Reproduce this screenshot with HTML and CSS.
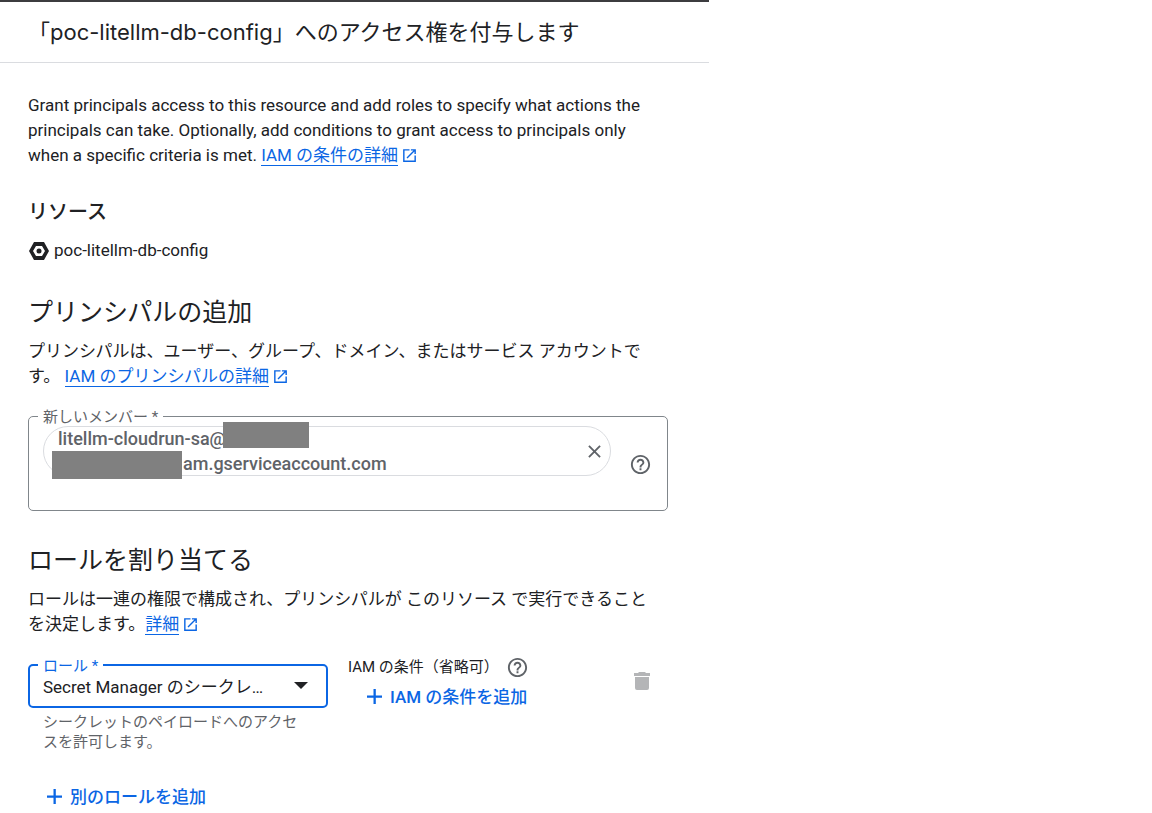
FILE: index.html
```html
<!DOCTYPE html>
<html lang="ja">
<head>
  <meta charset="UTF-8" />
  <meta name="viewport" content="width=device-width, initial-scale=1.0" />
  <title>アクセス権を付与</title>
  <link rel="stylesheet" href="styles.css">
</head>

<body>
  <svg class="sprite" aria-hidden="true">
    <symbol id="icon-launch" viewBox="0 0 24 24">
      <path d="M19 19H5V5h7V3H3v18h18v-9h-2v7zM14 3v2h3.6l-9.8 9.8 1.4 1.4L19 6.4V10h2V3h-7z" />
    </symbol>
    <symbol id="icon-help" viewBox="0 0 24 24">
      <path d="M11 18h2v-2h-2v2zm1-16C6.480 2 2 6.480 2 12s4.480 10 10 10 10-4.480 10-10S17.520 2 12 2zm0 18c-4.410 0-8-3.590-8-8s3.590-8 8-8 8 3.590 8 8-3.590 8-8 8zm0-14c-2.210 0-4 1.790-4 4h2c0-1.100.9-2 2-2s2 .9 2 2c0 2-3 1.750-3 5h2c0-2.250 3-2.500 3-5 0-2.210-1.790-4-4-4z" />
    </symbol>
    <symbol id="icon-plus" viewBox="0 0 16 16">
      <path d="M6.500 0h2.300v6.500H15v2.300H8.800V15H6.500V8.800H0V6.500h6.500z" />
    </symbol>
  </svg>

  <main class="panel">
    <header class="panel-header">
      <h1>「poc-litellm-db-config」へのアクセス権を付与します</h1>
    </header>

    <div class="panel-body">
      <p>Grant principals access to this resource and add roles to specify what actions the principals can take. Optionally, add conditions to grant access to principals only when a specific criteria is met. <a href="#">IAM の条件の詳細</a><svg class="launch"><use href="#icon-launch" /></svg></p>

      <h3>リソース</h3>
      <div class="resource">
        <svg class="resource-icon" viewBox="0 0 20 18">
          <path fill-rule="evenodd" d="M5 0h10l5 9-5 9H5L0 9zM7 4L4 9l3 5h6l3-5-3-5z" />
          <circle cx="10" cy="9" r="2.500" />
        </svg>
        <span>poc-litellm-db-config</span>
      </div>

      <h2>プリンシパルの追加</h2>
      <p>プリンシパルは、ユーザー、グループ、ドメイン、またはサービス アカウントです。 <a href="#">IAM のプリンシパルの詳細</a><svg class="launch"><use href="#icon-launch" /></svg></p>

      <fieldset class="field members">
        <legend><label for="members">新しいメンバー *</label></legend>
        <div class="members-row">
          <div class="members-main">
            <div class="chip">
              <div class="chip-text">
                <span>litellm-cloudrun-sa@</span>
                <span class="chip-domain">am.gserviceaccount.com</span>
              </div>
              <button class="chip-remove" aria-label="削除">
                <svg viewBox="0 0 14 14"><path d="M1 1l12 12M13 1L1 13" /></svg>
              </button>
              <span class="mask mask-top"></span>
              <span class="mask mask-bottom"></span>
            </div>
            <input type="text" id="members" />
          </div>
          <button class="help" aria-label="ヘルプ"><svg><use href="#icon-help" /></svg></button>
        </div>
      </fieldset>

      <h2>ロールを割り当てる</h2>
      <p>ロールは一連の権限で構成され、プリンシパルが このリソース で実行できることを決定します。<a href="#">詳細</a><svg class="launch"><use href="#icon-launch" /></svg></p>

      <div class="role-row">
        <div class="role">
          <fieldset class="field role-field">
            <legend><label for="role">ロール *</label></legend>
            <div class="select-row">
              <select id="role">
                <option>Secret Manager のシークレット アクセサー</option>
              </select>
              <svg class="arrow" viewBox="0 0 14 7"><path d="M0 0h14L7 7z" /></svg>
            </div>
          </fieldset>
          <div class="hint">シークレットのペイロードへのアクセスを許可します。</div>
        </div>

        <div class="condition">
          <div class="condition-label">
            <span>IAM の条件（省略可）</span>
            <button class="help" aria-label="ヘルプ"><svg><use href="#icon-help" /></svg></button>
          </div>
          <button class="add-btn"><svg><use href="#icon-plus" /></svg>IAM の条件を追加</button>
        </div>

        <button class="delete" aria-label="ロールを削除" disabled>
          <svg viewBox="0 0 16 18"><path d="M5 0h6l1 1h4v3H0V1h4zM1 5h14v11a2 2 0 0 1-2 2H3a2 2 0 0 1-2-2z" /></svg>
        </button>
      </div>

      <button class="add-btn add-role"><svg><use href="#icon-plus" /></svg>別のロールを追加</button>
    </div>
  </main>
</body>
</html>
```

FILE: styles.css
```css
* {
  box-sizing: border-box;
}

body {
  margin: 0;
  background-color: #fff;
  color: #202124;
  font-family: Roboto, "Noto Sans CJK JP", sans-serif;
  font-size: 17px;
  line-height: 25px;
}

.sprite {
  display: none;
}

svg {
  fill: currentColor;
  flex-shrink: 0;
}

button {
  display: flex;
  align-items: center;
  padding: 0;
  border: none;
  background: none;
  color: inherit;
  font: inherit;
  cursor: pointer;
}

.panel {
  max-width: 709px;
}

.panel-header {
  padding: 14px 28px;
  border-top: 2px solid #3c3c3f;
  border-bottom: 1px solid #dadce0;
}

h1, h2, h3, p {
  margin: 0;
}

h1 {
  font-family: Inter, "Noto Sans CJK JP", sans-serif;
  font-size: 22px;
  font-weight: 400;
  line-height: 32px;
}

.panel-body {
  padding: 30px 41px 0 28px;
}

h2 {
  margin: 34px 0 10px;
  font-size: 25px;
  font-weight: 400;
  line-height: 32px;
}

h3 {
  margin: 30px 0 12px;
  font-size: 20px;
  font-weight: 500;
  line-height: 28px;
}

p {
  padding-right: 10px;
}

a {
  color: #0b66e4;
  text-decoration: none;
  border-bottom: 1px solid;
}

.launch {
  width: 17px;
  height: 17px;
  margin-left: 3px;
  vertical-align: -3px;
  color: #0b66e4;
}

.resource {
  display: flex;
  align-items: center;
  gap: 5px;
}

.resource-icon {
  width: 20px;
  height: 18px;
  margin-left: 1px;
}

.field {
  min-width: 0;
  margin: 0;
  padding: 0 14px;
  border: 1px solid #80868b;
  border-radius: 5px;
}

.field legend {
  margin-left: -5px;
  padding: 2px 5px 0;
  font-size: 15px;
  line-height: 18px;
  color: #5f6368;
}

.members {
  margin-top: 17px;
}

.members-row {
  display: flex;
  align-items: center;
  gap: 18px;
  padding-bottom: 8px;
}

.members-main {
  flex: 1;
}

.members input {
  display: block;
  width: 100%;
  height: 26px;
  padding: 0 14px;
  border: none;
  outline: none;
  background: none;
  font: inherit;
}

.chip {
  position: relative;
  display: flex;
  align-items: center;
  justify-content: space-between;
  height: 50px;
  padding: 0 9px 0 14px;
  border: 1px solid #dadce0;
  border-radius: 25px;
  color: #5f6368;
  font-size: 18px;
  font-weight: 500;
}

.chip-text {
  display: flex;
  flex-direction: column;
}

.chip-domain {
  padding-left: 125px;
}

.chip-remove svg {
  width: 13px;
  height: 13px;
  stroke: currentColor;
  stroke-width: 2;
}

/* redacted parts of the address */
.mask {
  position: absolute;
  background-color: #808080;
}

.mask-top {
  top: -5px;
  left: 179px;
  width: 86px;
  height: 26px;
}

.mask-bottom {
  top: 24px;
  left: 8px;
  width: 130px;
  height: 28px;
}

.help {
  color: #5f6368;
}

.help svg {
  width: 23px;
  height: 23px;
}

.members .help {
  margin-right: 1px;
}

.role-row {
  display: grid;
  grid-template-columns: 300px 1fr auto;
  gap: 20px;
  margin-top: 18px;
}

.role-field {
  padding: 0 13px;
  border: 2px solid #0b66e4;
}

.role-field legend {
  color: #0b66e4;
}

.select-row {
  display: flex;
  align-items: center;
  gap: 20px;
  padding: 0 5px 10px 0;
}

select {
  flex: 1;
  min-width: 0;
  height: 21px;
  padding: 0;
  border: none;
  outline: none;
  background: none;
  color: inherit;
  font: inherit;
  appearance: none;
  overflow: hidden;
  text-overflow: ellipsis;
  white-space: nowrap;
}

.arrow {
  width: 14px;
  height: 7px;
}

.hint {
  padding: 4px 28px 0 15px;
  color: #5f6368;
  font-size: 15px;
  line-height: 20px;
}

.condition-label {
  display: flex;
  align-items: center;
  gap: 7px;
  font-size: 15px;
}

.add-btn {
  gap: 7px;
  height: 30px;
  padding: 0 19px;
  color: #0b66e4;
  font-weight: 500;
}

.add-btn svg {
  width: 16px;
  height: 16px;
}

.condition .add-btn {
  margin-top: 2px;
}

.delete {
  align-self: start;
  height: 52px;
  margin-right: 18px;
  color: #b4b5b7;
}

.delete svg {
  width: 16px;
  height: 18px;
}

.add-role {
  margin-top: 30px;
}
```
